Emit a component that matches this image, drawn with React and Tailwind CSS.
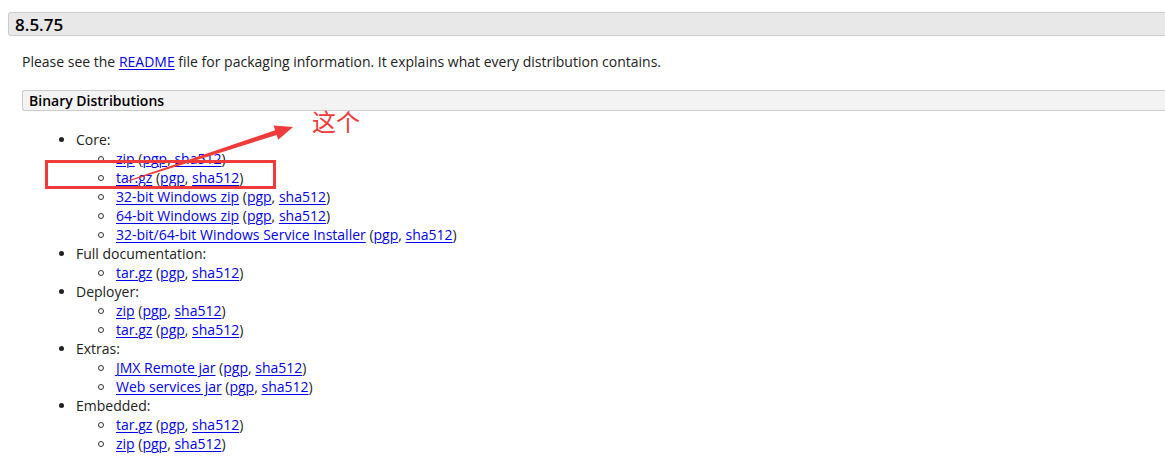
import React from 'react';

const groups = [
  {
    label: 'Core:',
    items: [
      'zip',
      'tar.gz',
      '32-bit Windows zip',
      '64-bit Windows zip',
      '32-bit/64-bit Windows Service Installer',
    ],
  },
  { label: 'Full documentation:', items: ['tar.gz'] },
  { label: 'Deployer:', items: ['zip', 'tar.gz'] },
  { label: 'Extras:', items: ['JMX Remote jar', 'Web services jar'] },
  { label: 'Embedded:', items: ['tar.gz', 'zip'] },
];

const A = ({ children }) => (
  <a href="#" className="text-[#0000ee] underline underline-offset-[2px] decoration-1">
    {children}
  </a>
);

const App = () => {
  return (
    <div
      className="relative w-[1165px] h-[459px] overflow-hidden bg-white text-[#222] text-[14px] leading-[19px]"
      style={{ fontFamily: '"Open Sans", "Noto Sans", sans-serif' }}
    >
      <div className="pt-[12px] pl-[8px]">
        {/* Version header */}
        <div className="h-[24px] flex items-center pl-[6px] bg-[#e8e8e8] border border-r-0 border-[#cccccc] rounded-l-[3px] text-[17px] font-semibold text-black">
          8.5.75
        </div>

        <p className="mt-[16px] ml-[14px]">
          Please see the <A>README</A> file for packaging information. It explains what every distribution contains.
        </p>

        {/* Section header */}
        <div className="mt-[19px] ml-[14px] h-[21px] flex items-center pl-[6px] bg-[#f3f3f3] border border-r-0 border-[#cccccc] rounded-l-[3px] font-semibold text-black">
          Binary Distributions
        </div>

        <div className="mt-[19px] ml-[14px]">
          {groups.map((g) => (
            <div key={g.label}>
              <div className="flex items-center h-[19px]">
                <span className="ml-[37px] w-[5px] h-[5px] rounded-full bg-[#222]" />
                <span className="ml-[12px]">{g.label}</span>
              </div>
              {g.items.map((it, i) => (
                <div key={i} className="flex items-center h-[19px]">
                  <span className="ml-[76px] w-[6px] h-[6px] rounded-full border border-[#333]" />
                  <span className="ml-[12px] whitespace-nowrap">
                    <A>{it}</A> (<A>pgp</A>, <A>sha512</A>)
                  </span>
                </div>
              ))}
            </div>
          ))}
        </div>
      </div>

      {/* Red annotation */}
      <div className="absolute left-[45px] top-[160px] w-[231px] h-[29px] border-[3px] border-[#f03b3b]" />
      <svg className="absolute left-0 top-0 pointer-events-none" width="1165" height="459">
        <polygon
          points="127.8,180.5 275.1,130.2 273.6,125.5 293,127 278.2,139.7 276.7,135 128.2,181.5"
          fill="#f03b3b"
        />
      </svg>
      <div
        className="absolute left-[312px] top-[109px] text-[24px] leading-[24px] text-[#f03b3b]"
        style={{ fontFamily: '"Noto Sans CJK SC", sans-serif' }}
      >
        这个
      </div>
    </div>
  );
};

export default App;
